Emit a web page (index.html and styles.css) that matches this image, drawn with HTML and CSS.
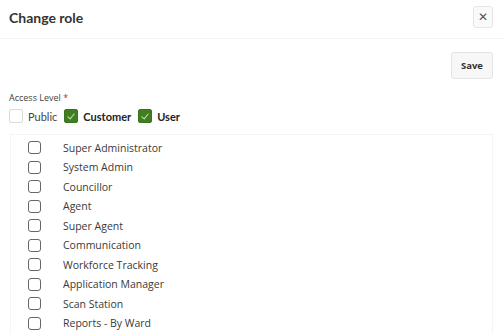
FILE: index.html
```html
<!DOCTYPE html>
<html lang="en">
<head>
  <meta charset="UTF-8">
  <title>Change role</title>
  <link rel="stylesheet" href="styles.css">
</head>
<body>

<div class="dialog">
  <div class="dlg-header">
    <h3 class="dlg-title">Change role</h3>
    <button class="close-btn">&#x2715;</button>
  </div>

  <div class="dlg-body">
    <div class="actions">
      <button class="save-btn">Save</button>
    </div>

    <label class="field-label">Access Level <span class="req">*</span></label>
    <div class="access-row">
      <span class="chk"></span><span class="acc-text">Public</span>
      <span class="chk on"></span><span class="acc-text bold">Customer</span>
      <span class="chk on"></span><span class="acc-text bold">User</span>
    </div>

    <div class="role-list">
      <div class="role"><span class="box"></span>Super Administrator</div>
      <div class="role"><span class="box"></span>System Admin</div>
      <div class="role"><span class="box"></span>Councillor</div>
      <div class="role"><span class="box"></span>Agent</div>
      <div class="role"><span class="box"></span>Super Agent</div>
      <div class="role"><span class="box"></span>Communication</div>
      <div class="role"><span class="box"></span>Workforce Tracking</div>
      <div class="role"><span class="box"></span>Application Manager</div>
      <div class="role"><span class="box"></span>Scan Station</div>
      <div class="role"><span class="box"></span>Reports - By Ward</div>
    </div>
  </div>
</div>

</body>
</html>
```

FILE: styles.css
```css
body {
  margin: 0;
  background: #fff;
  font-family: "Open Sans", sans-serif;
  color: #333;
  overflow: hidden;
}
.dialog {
  width: 503px;
  height: 334px;
  overflow: hidden;
}
.dlg-header {
  height: 38px;
  display: flex;
  align-items: center;
  justify-content: space-between;
  padding: 0 10px 0 9px;
  border-bottom: 1px solid #f3f3f3;
}
.dlg-title {
  margin: 0 0 3px 0;
  font-family: Lato, sans-serif;
  font-size: 14px;
  font-weight: 700;
  color: #333;
}
.close-btn {
  width: 20px;
  height: 22px;
  padding: 0;
  margin-bottom: 4px;
  border: 1px solid #e6e6e6;
  border-radius: 3px;
  background: #fafafa;
  color: #555;
  font-size: 12px;
  font-family: "DejaVu Sans", sans-serif;
}
.dlg-body {
  padding: 13px 10px 0 9px;
}
.actions {
  display: flex;
  justify-content: flex-end;
}
.save-btn {
  width: 42px;
  height: 27px;
  padding: 0;
  border: 1px solid #e3e3e3;
  border-radius: 3px;
  background: #f7f7f7;
  font-family: "Open Sans", sans-serif;
  font-size: 9.5px;
  font-weight: 700;
  color: #333;
}
.field-label {
  display: block;
  margin-top: 13px;
  font-size: 9px;
  color: #444;
  line-height: 12px;
}
.req {
  color: #e02020;
}
.access-row {
  display: flex;
  align-items: center;
  height: 16px;
  margin-top: 4px;
}
.chk {
  width: 14px;
  height: 14px;
  border: 1px solid #d8d8d8;
  border-radius: 2px;
  box-sizing: border-box;
  background: #fff;
}
.chk.on {
  background: #3f7f20;
  border-color: #3a7420;
  position: relative;
}
.chk.on::after {
  content: "";
  position: absolute;
  left: 4px;
  top: 2px;
  width: 3px;
  height: 6px;
  border: solid #c8e0b4;
  border-width: 0 1px 1px 0;
  transform: rotate(40deg);
}
.acc-text {
  margin: 0 7px 0 5px;
  font-family: Lato, sans-serif;
  font-size: 11px;
  color: #444;
}
.acc-text.bold {
  font-weight: 700;
  color: #222;
}
.role-list {
  margin-top: 10px;
  margin-left: 1px;
  border: 1px solid #f4f4f4;
  padding: 3px 0 0 17px;
  height: 300px;
}
.role {
  display: flex;
  align-items: center;
  height: 19.5px;
  font-size: 10.5px;
  color: #3a3a3a;
}
.box {
  width: 13px;
  height: 13px;
  box-sizing: border-box;
  border: 1.5px solid #666;
  border-radius: 3px;
  margin-right: 22px;
}
```
